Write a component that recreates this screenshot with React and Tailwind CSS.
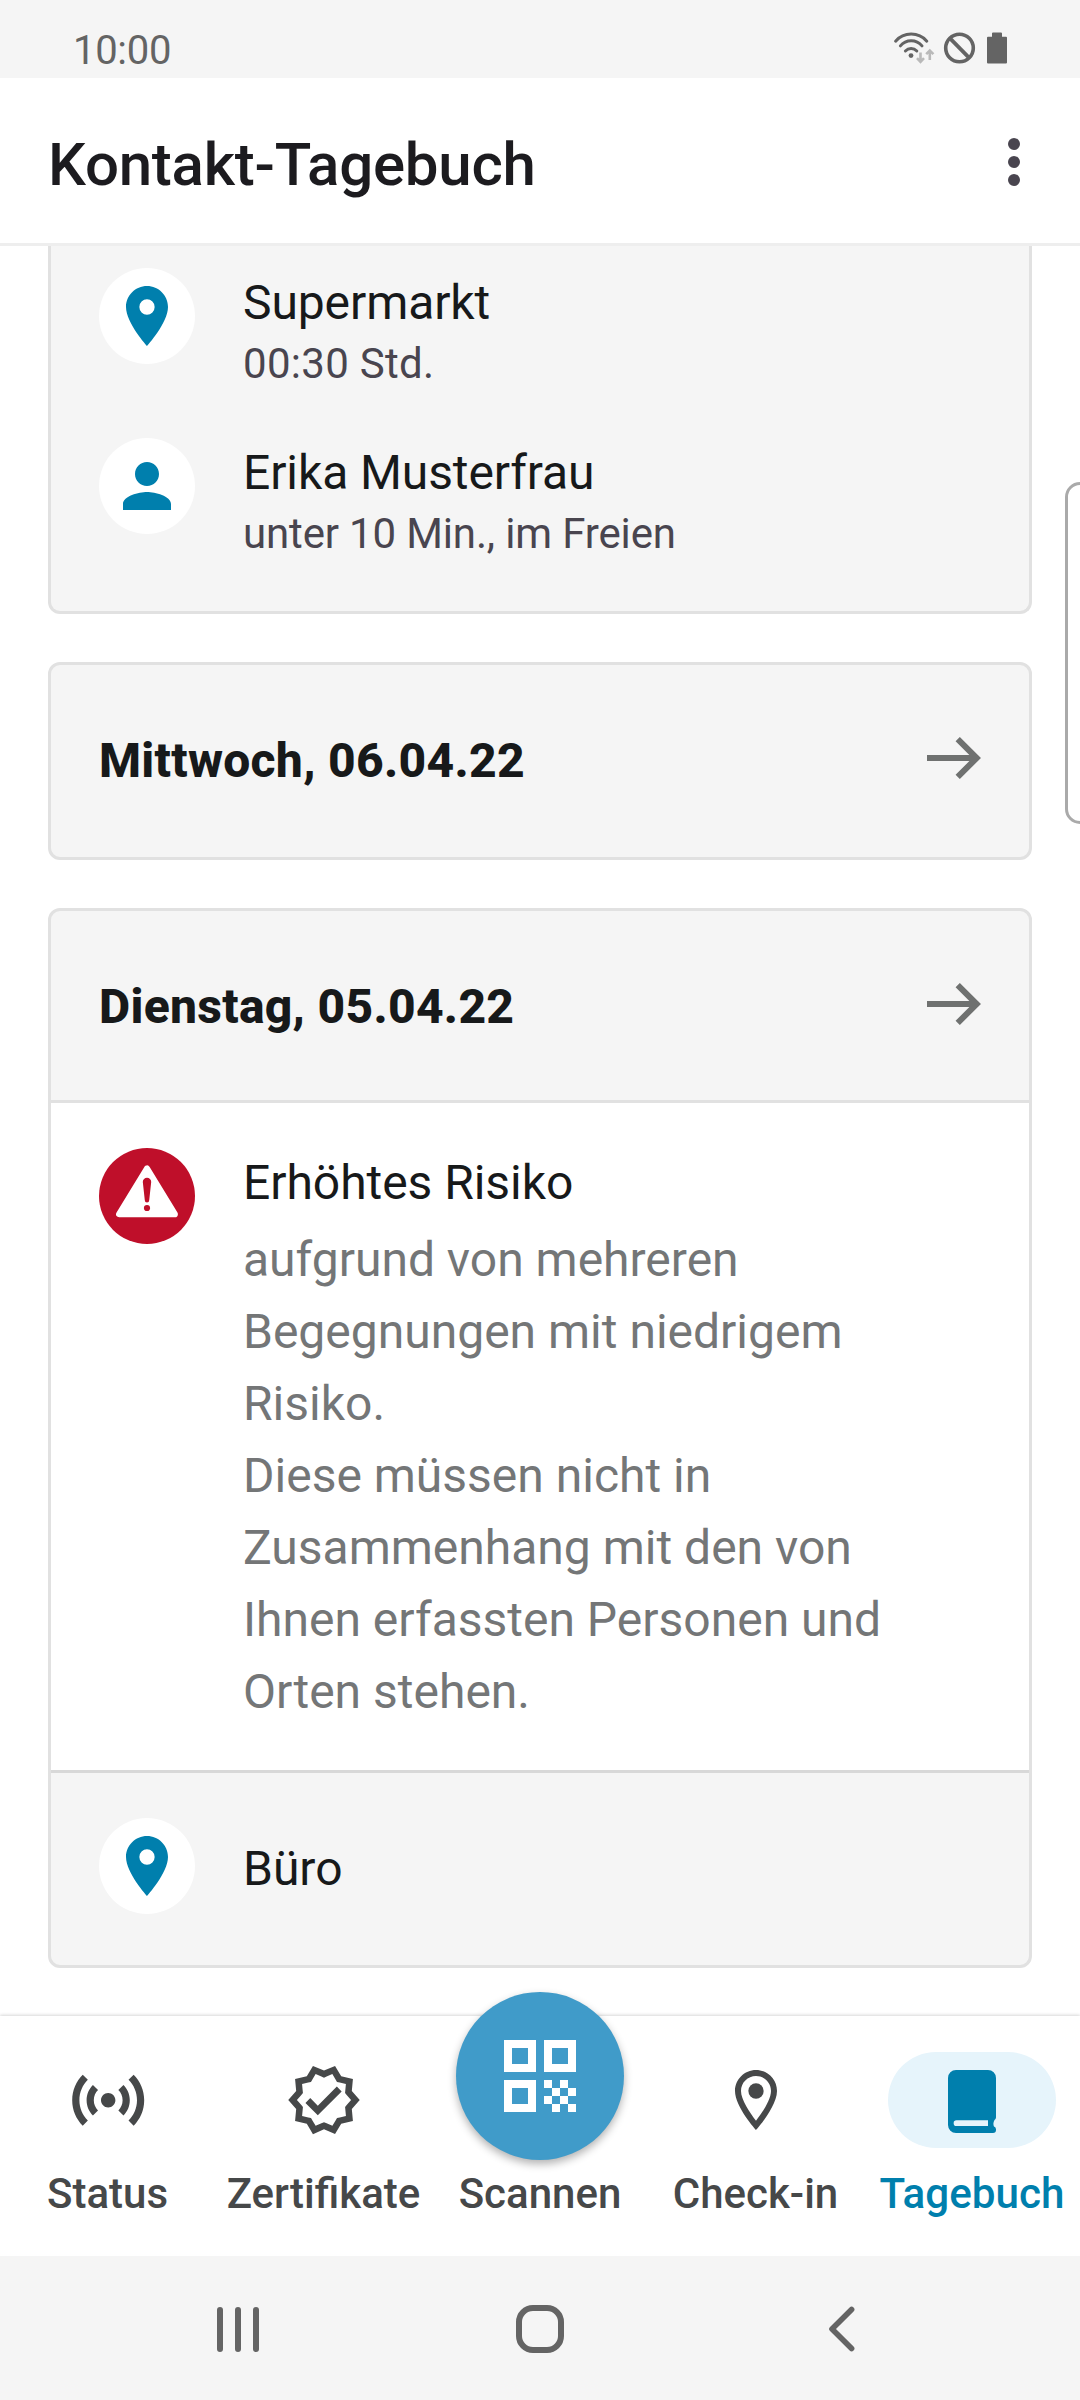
function StatusIcons() {
  return (
    <svg width="120" height="36" viewBox="892 30 120 36" fill="none">
      <g stroke="#646464" strokeWidth="3" strokeLinecap="round">
        <path d="M895.6 41.2a20.7 20.7 0 0 1 31.2 0" />
        <path d="M900.4 45.9a14 14 0 0 1 21.6 0" />
        <path d="M905.4 51a8 8 0 0 1 11.4 0" />
      </g>
      <circle cx="911" cy="55.6" r="2.4" fill="#646464" />
      <g stroke="#b9b9b9" strokeWidth="2.6">
        <path d="M920.5 52.6v9.4M917 58.2l3.5 3.6 3.5-3.6" />
        <path d="M929.8 60V50.5M926.2 54.2l3.6-3.6 3.6 3.6" />
      </g>
      <circle cx="959.5" cy="48" r="13.8" stroke="#646464" strokeWidth="3.6" />
      <path d="M949.8 38.2l19.4 19.6" stroke="#646464" strokeWidth="3.8" />
      <path
        d="M993 32.4h8a1 1 0 0 1 1 1V36.8h4a1 1 0 0 1 1 1V62.6a1 1 0 0 1-1 1h-18a1 1 0 0 1-1-1V37.8a1 1 0 0 1 1-1h4V33.4a1 1 0 0 1 1-1z"
        fill="#646464"
      />
    </svg>
  );
}

function PlaceIcon() {
  return (
    <svg width="72" height="72" viewBox="0 0 24 24" fill="#007fad">
      <path
        fillRule="evenodd"
        d="M12 2C8.13 2 5 5.13 5 9c0 5.25 7 13 7 13s7-7.75 7-13c0-3.87-3.13-7-7-7zm0 9.55a2.55 2.55 0 1 1 0-5.1 2.55 2.55 0 0 1 0 5.1z"
      />
    </svg>
  );
}

function PersonIcon() {
  return (
    <svg width="72" height="72" viewBox="0 0 24 24" fill="#007fad">
      <path d="M12 12c2.21 0 4-1.79 4-4s-1.79-4-4-4-4 1.79-4 4 1.79 4 4 4zm0 2c-2.67 0-8 1.34-8 4v2h16v-2c0-2.66-5.33-4-8-4z" />
    </svg>
  );
}

function RiskIcon() {
  return (
    <svg className="shrink-0" width="96" height="96" viewBox="0 0 96 96">
      <circle cx="48" cy="48" r="48" fill="#bf0f2a" />
      <path d="M48 20.5L20.2 66.2H75.8z" fill="#fff" stroke="#fff" strokeWidth="6.2" strokeLinejoin="round" />
      <path d="M43.8 33.9a4.2 4.2 0 0 1 8.4 0L50.2 52.3a2.2 2.2 0 0 1-4.4 0z" fill="#bf0f2a" />
      <circle cx="48" cy="60" r="3.1" fill="#bf0f2a" />
    </svg>
  );
}

function ArrowIcon() {
  return (
    <svg width="54" height="42" viewBox="0 0 54 42" fill="none" stroke="#6f7170" strokeWidth="6">
      <path d="M0 21H46M30.7 2.1L49.7 21 30.7 39.9" />
    </svg>
  );
}

function SensorsIcon() {
  return (
    <svg width="86.4" height="86.4" viewBox="0 0 24 24" fill="#464849">
      <path d="M7.76 16.24C6.67 15.16 6 13.66 6 12s.67-3.16 1.76-4.24l1.42 1.42C8.45 9.9 8 10.9 8 12c0 1.1.45 2.1 1.17 2.83l-1.41 1.41zm8.48 0C17.33 15.16 18 13.66 18 12s-.67-3.16-1.76-4.24l-1.42 1.42C15.55 9.9 16 10.9 16 12c0 1.1-.45 2.1-1.17 2.83l1.41 1.41zM12 10c-1.1 0-2 .9-2 2s.9 2 2 2 2-.9 2-2-.9-2-2-2zm8 2c0 2.21-.9 4.21-2.35 5.65l1.42 1.42C20.88 17.26 22 14.76 22 12s-1.12-5.26-2.93-7.07l-1.42 1.42C19.1 7.79 20 9.79 20 12zM6.35 6.35L4.93 4.93C3.12 6.74 2 9.24 2 12s1.12 5.26 2.93 7.07l1.42-1.42C4.9 16.21 4 14.21 4 12s.9-4.21 2.35-5.65z" />
    </svg>
  );
}

function VerifiedIcon() {
  return (
    <svg width="78" height="78" viewBox="0 0 24 24" fill="#464849">
      <path d="M23 11.99l-2.44-2.79.34-3.69-3.61-.82L15.4 1.5 12 2.96 8.6 1.5 6.71 4.69 3.1 5.5l.34 3.7L1 11.99l2.44 2.79-.34 3.7 3.61.82 1.89 3.2 3.4-1.47 3.4 1.46 1.89-3.19 3.61-.82-.34-3.69L23 11.99zm-3.95 1.48l-.56.65.08.85.18 1.95-1.9.43-.84.19-.44.74-.99 1.68-1.78-.77-.8-.34-.79.34-1.78.77-.99-1.67-.44-.74-.84-.19-1.9-.43.18-1.96.08-.85-.56-.65L3.67 12l1.29-1.48.56-.65-.09-.86-.18-1.94 1.9-.43.84-.19.44-.74.99-1.68 1.78.77.8.34.79-.34 1.78-.77.99 1.68.44.74.84.19 1.9.43-.18 1.95-.08.85.56.65 1.29 1.47-1.28 1.48z" />
      <path d="M10.09 13.75l-2.32-2.33-1.48 1.49 3.8 3.81 7.34-7.36-1.48-1.49z" />
    </svg>
  );
}

function QrIcon() {
  return (
    <svg width="72" height="72" viewBox="0 0 9 9" shapeRendering="crispEdges">
      <path
        fill="#fff"
        fillRule="evenodd"
        d="M0 0h4v4H0zM1 1v2h2V1zM5 0h4v4H5zM6 1v2h2V1zM0 5h4v4H0zM1 6v2h2V6zM5 5h1v1H5zM7 5h1v1H7zM6 6h1v1H6zM8 6h1v1H8zM5 7h1v1H5zM7 7h1v1H7zM6 8h1v1H6zM8 8h1v1H8z"
      />
    </svg>
  );
}

function CheckinIcon() {
  return (
    <svg width="72" height="72" viewBox="0 0 24 24" fill="#464849">
      <path d="M12 2C8.13 2 5 5.13 5 9c0 5.25 7 13 7 13s7-7.75 7-13c0-3.87-3.13-7-7-7zM7 9c0-2.76 2.24-5 5-5s5 2.24 5 5c0 2.88-2.88 7.19-5 9.88C9.92 16.21 7 11.85 7 9z" />
      <circle cx="12" cy="9" r="2.55" />
    </svg>
  );
}

function BookIcon() {
  return (
    <svg className="mt-[3px]" width="48" height="63" viewBox="0 0 48 63">
      <path
        fill="#007fad"
        fillRule="evenodd"
        d="M8 0H40a8 8 0 0 1 8 8V47.5a3 3 0 0 1-1.5 2.4Q44.6 53.3 46 56.6a3 3 0 0 1 2 2.9V60a3 3 0 0 1-3 3H8a8 8 0 0 1-8-8V8a8 8 0 0 1 8-8zM8.5 50.3a2.85 2.85 0 0 0 0 5.7H40V50.3z"
      />
    </svg>
  );
}

function Entry({ icon, title, children }) {
  return (
    <div className="flex h-[170px] gap-12">
      <div className="flex size-24 shrink-0 items-center justify-center rounded-full bg-white">{icon}</div>
      <div className="pt-1.5">
        <div className="text-[48px] leading-[57px] tracking-[-0.1px] text-[#17191a]">{title}</div>
        <div className="mt-2 text-[42px] leading-[49px] text-[#49454f]">{children}</div>
      </div>
    </div>
  );
}

function DayHeader({ children }) {
  return (
    <div className="flex h-[186px] items-center justify-between px-12">
      <h2 className="pt-[5px] text-[48px] leading-[57px] font-extrabold tracking-[0.29px] text-[#17191a]">
        {children}
      </h2>
      <ArrowIcon />
    </div>
  );
}

function Tab({ icon, label, active }) {
  return (
    <div className="flex w-[216px] flex-col items-center pt-9">
      <div
        className={
          active
            ? "flex h-24 w-[168px] items-center justify-center rounded-full bg-[#e6f4fb]"
            : "flex h-24 w-[168px] items-center justify-center"
        }
      >
        {icon}
      </div>
      <div
        className={
          active
            ? "mt-[21px] text-[42.2px] leading-[49px] font-medium whitespace-nowrap text-[#007fad]"
            : icon
              ? "mt-[21px] mr-px text-[42px] leading-[49px] font-medium whitespace-nowrap text-[#464849]"
              : "mt-[21px] text-[42px] leading-[49px] font-medium whitespace-nowrap text-[#464849]"
        }
      >
        {label}
      </div>
    </div>
  );
}

export default function App() {
  return (
    <div className="relative flex h-[2400px] w-[1080px] flex-col overflow-hidden bg-white font-[Roboto,sans-serif]">
      <div className="flex h-[78px] shrink-0 items-start justify-between bg-[#f5f5f5] pr-[68px] pl-[73px]">
        <span className="mt-[27px] text-[40px] leading-[47px] tracking-[-0.3px] text-[#646464]">10:00</span>
        <div className="mt-[30px]">
          <StatusIcons />
        </div>
      </div>

      <header className="flex h-[168px] shrink-0 items-start justify-between border-b-[3px] border-[#eeeeee] pr-[60px] pl-12">
        <h1 className="mt-[51px] text-[60px] leading-[71px] font-medium tracking-[-0.24px] text-[#1c1b1f]">
          Kontakt-Tagebuch
        </h1>
        <div className="mt-[60px] flex flex-col gap-1.5">
          <span className="size-3 rounded-full bg-[#49454f]" />
          <span className="size-3 rounded-full bg-[#49454f]" />
          <span className="size-3 rounded-full bg-[#49454f]" />
        </div>
      </header>

      <main className="flex h-[1770px] shrink-0 flex-col gap-12 px-12">
        <section className="h-[368px] shrink-0 rounded-b-[12px] border-[3px] border-t-0 border-[#e1e1e1] bg-[#f5f5f5] px-12 pt-[22px]">
          <Entry icon={<PlaceIcon />} title="Supermarkt">
            <span className="tracking-[0.3px]">00:30 Std.</span>
          </Entry>
          <Entry icon={<PersonIcon />} title="Erika Musterfrau">
            <span className="tracking-[-0.15px]">unter 10 Min., im Freien</span>
          </Entry>
        </section>

        <section className="h-[198px] shrink-0 rounded-[12px] border-[3px] border-[#e1e1e1] bg-[#f5f5f5]">
          <DayHeader>Mittwoch, 06.04.22</DayHeader>
        </section>

        <section className="h-[1060px] shrink-0 overflow-hidden rounded-[12px] border-[3px] border-[#e1e1e1] bg-[#f5f5f5]">
          <div className="h-[192px] border-b-[3px] border-[#e1e1e1]">
            <DayHeader>Dienstag, 05.04.22</DayHeader>
          </div>
          <div className="flex h-[670px] gap-12 border-b-[3px] border-[#d8d8d8] bg-white px-12 pt-[45px]">
            <RiskIcon />
            <div className="w-[720px] pt-1.5">
              <div className="text-[48px] leading-[57px] tracking-[-0.05px] text-[#17191a]">Erhöhtes Risiko</div>
              <p className="mt-[13px] text-[48px] leading-[72px] text-[#747677]">
                aufgrund von mehreren Begegnungen mit niedrigem Risiko.
                <br />
                Diese müssen nicht in Zusammenhang mit den von Ihnen erfassten Personen und Orten stehen.
              </p>
            </div>
          </div>
          <div className="flex gap-12 px-12 pt-[45px]">
            <div className="flex size-24 items-center justify-center rounded-full bg-white">
              <PlaceIcon />
            </div>
            <div className="mt-[22px] text-[48px] leading-[57px] text-[#17191a]">Büro</div>
          </div>
        </section>
      </main>

      <nav className="relative flex h-[240px] shrink-0 bg-white shadow-[0_-1px_3px_rgba(0,0,0,0.16)]">
        <Tab icon={<SensorsIcon />} label="Status" />
        <Tab icon={<VerifiedIcon />} label="Zertifikate" />
        <Tab label="Scannen" />
        <Tab icon={<CheckinIcon />} label="Check-in" />
        <Tab icon={<BookIcon />} label="Tagebuch" active />
        <button className="absolute -top-6 left-[456px] flex size-[168px] items-center justify-center rounded-full bg-[#409bc9] shadow-[0_4px_8px_rgba(0,0,0,0.3)]">
          <QrIcon />
        </button>
      </nav>

      <footer className="relative flex h-36 shrink-0 items-center justify-between bg-[#f5f5f5] pt-0.5 pr-[225px] pl-[217px]">
        <div className="flex h-[45px] gap-3">
          <span className="w-1.5 rounded-full bg-[#646464]" />
          <span className="w-1.5 rounded-full bg-[#646464]" />
          <span className="w-1.5 rounded-full bg-[#646464]" />
        </div>
        <div className="mr-[7px] size-12 rounded-[17px] border-[6px] border-[#646464]" />
        <svg width="27" height="46" viewBox="0 0 27 46" fill="none" stroke="#646464" strokeWidth="5.6" strokeLinecap="round" strokeLinejoin="round">
          <path d="M23.6 3.4L4 23l19.6 19.6" />
        </svg>
      </footer>

      <div className="absolute top-[482px] left-[1065px] h-[342px] w-[30px] rounded-l-[15px] border-[3px] border-[#aaaaaa] bg-white" />
    </div>
  );
}
